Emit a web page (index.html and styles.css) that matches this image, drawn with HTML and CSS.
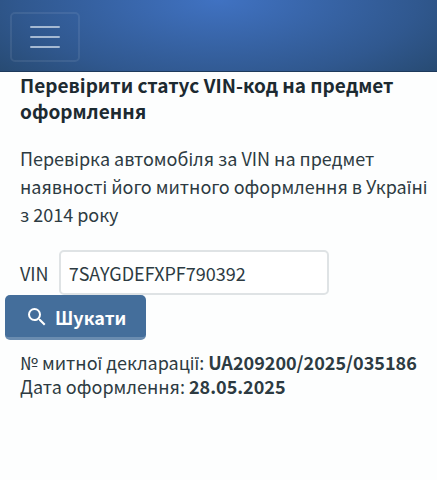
FILE: index.html
```
<!DOCTYPE html>
<html lang="uk">
<head>
  <meta charset="UTF-8">
  <meta name="viewport" content="width=device-width, initial-scale=1">
  <title>Перевірка VIN-коду</title>
  <link rel="stylesheet" href="styles.css">
</head>
<body>

  <header class="navbar">
    <button type="button" class="navbar-toggler" aria-label="Меню">
      <svg class="toggler-icon" viewBox="0 0 30 30" aria-hidden="true">
        <path d="M1 5h28M1 15h28M1 25h28"/>
      </svg>
    </button>
  </header>

  <main class="content">
    <h1 class="title">Перевірити статус VIN-код на предмет оформлення</h1>
    <p class="lead">Перевірка автомобіля за VIN на предмет наявності його митного оформлення в Україні з 2014 року</p>

    <form class="vin-form">
      <div class="field">
        <label for="vin">VIN</label>
        <input type="text" id="vin" name="vin" class="vin-input" value="7SAYGDEFXPF790392">
      </div>
      <button type="submit" class="btn-search">
        <svg class="search-icon" viewBox="0 0 24 24" aria-hidden="true">
          <path d="M15.5 14h-.79l-.28-.27A6.471 6.471 0 0 0 16 9.5 6.5 6.5 0 1 0 9.5 16c1.61 0 3.09-.59 4.23-1.57l.27.28v.79l5 4.99L20.49 19l-4.99-5zm-6 0C7.01 14 5 11.99 5 9.5S7.01 5 9.5 5 14 7.01 14 9.5 11.99 14 9.5 14z"/>
        </svg>
        <span>Шукати</span>
      </button>
    </form>

    <div class="result">
      № митної декларації: <b>UA209200/2025/035186</b><br>
      Дата оформлення: <b>28.05.2025</b>
    </div>
  </main>

</body>
</html>
```
FILE: styles.css
```
* { box-sizing: border-box; }

body {
  margin: 0;
  background: #fdfefe;
  color: #2d3b42;
  font-family: "Source Sans Pro", "Noto Sans CJK SC", "Noto Sans", sans-serif;
  font-size: 18px;
  line-height: 28px;
}

.navbar {
  display: flex;
  padding: 12px 10px 9px;
  background: radial-gradient(ellipse 70% 170% at 50% 0, #4072c2 0%, #30588f 65%, #25476b 100%);
  border-bottom: 1px solid #1d3a5c;
}

.navbar-toggler {
  display: flex;
  padding: 8px 18px;
  background: transparent;
  border: 2px solid rgba(255, 255, 255, 0.08);
  border-radius: 5px;
  cursor: pointer;
}

.toggler-icon {
  width: 30px;
  height: 30px;
  fill: none;
  stroke: #a5b9d2;
  stroke-width: 2;
  stroke-linecap: round;
}

.content { padding: 0 5px; }

.title {
  margin: 0 15px 20px;
  color: #1c2a31;
  font-size: 19px;
  line-height: 26px;
  font-weight: 700;
}

.lead { margin: 0 0 22px 15px; }

.field {
  display: flex;
  align-items: center;
  gap: 10px;
  margin-left: 15px;
}

.vin-input {
  width: 270px;
  height: 45px;
  padding: 0 8px;
  background: #fff;
  color: inherit;
  border: 2px solid #dfe3e5;
  border-radius: 5px;
  font: inherit;
}

.btn-search {
  display: flex;
  align-items: center;
  gap: 6px;
  height: 45px;
  padding: 2px 20px 0;
  background: #446e9b;
  color: #fff;
  border: 0;
  border-bottom: 3px solid #6a8cb0;
  border-radius: 5px;
  font: inherit;
  font-weight: 600;
  cursor: pointer;
}

.search-icon {
  width: 24px;
  height: 24px;
  fill: currentColor;
}

.result {
  margin: 10px 0 0 15px;
  line-height: 24px;
}
```
